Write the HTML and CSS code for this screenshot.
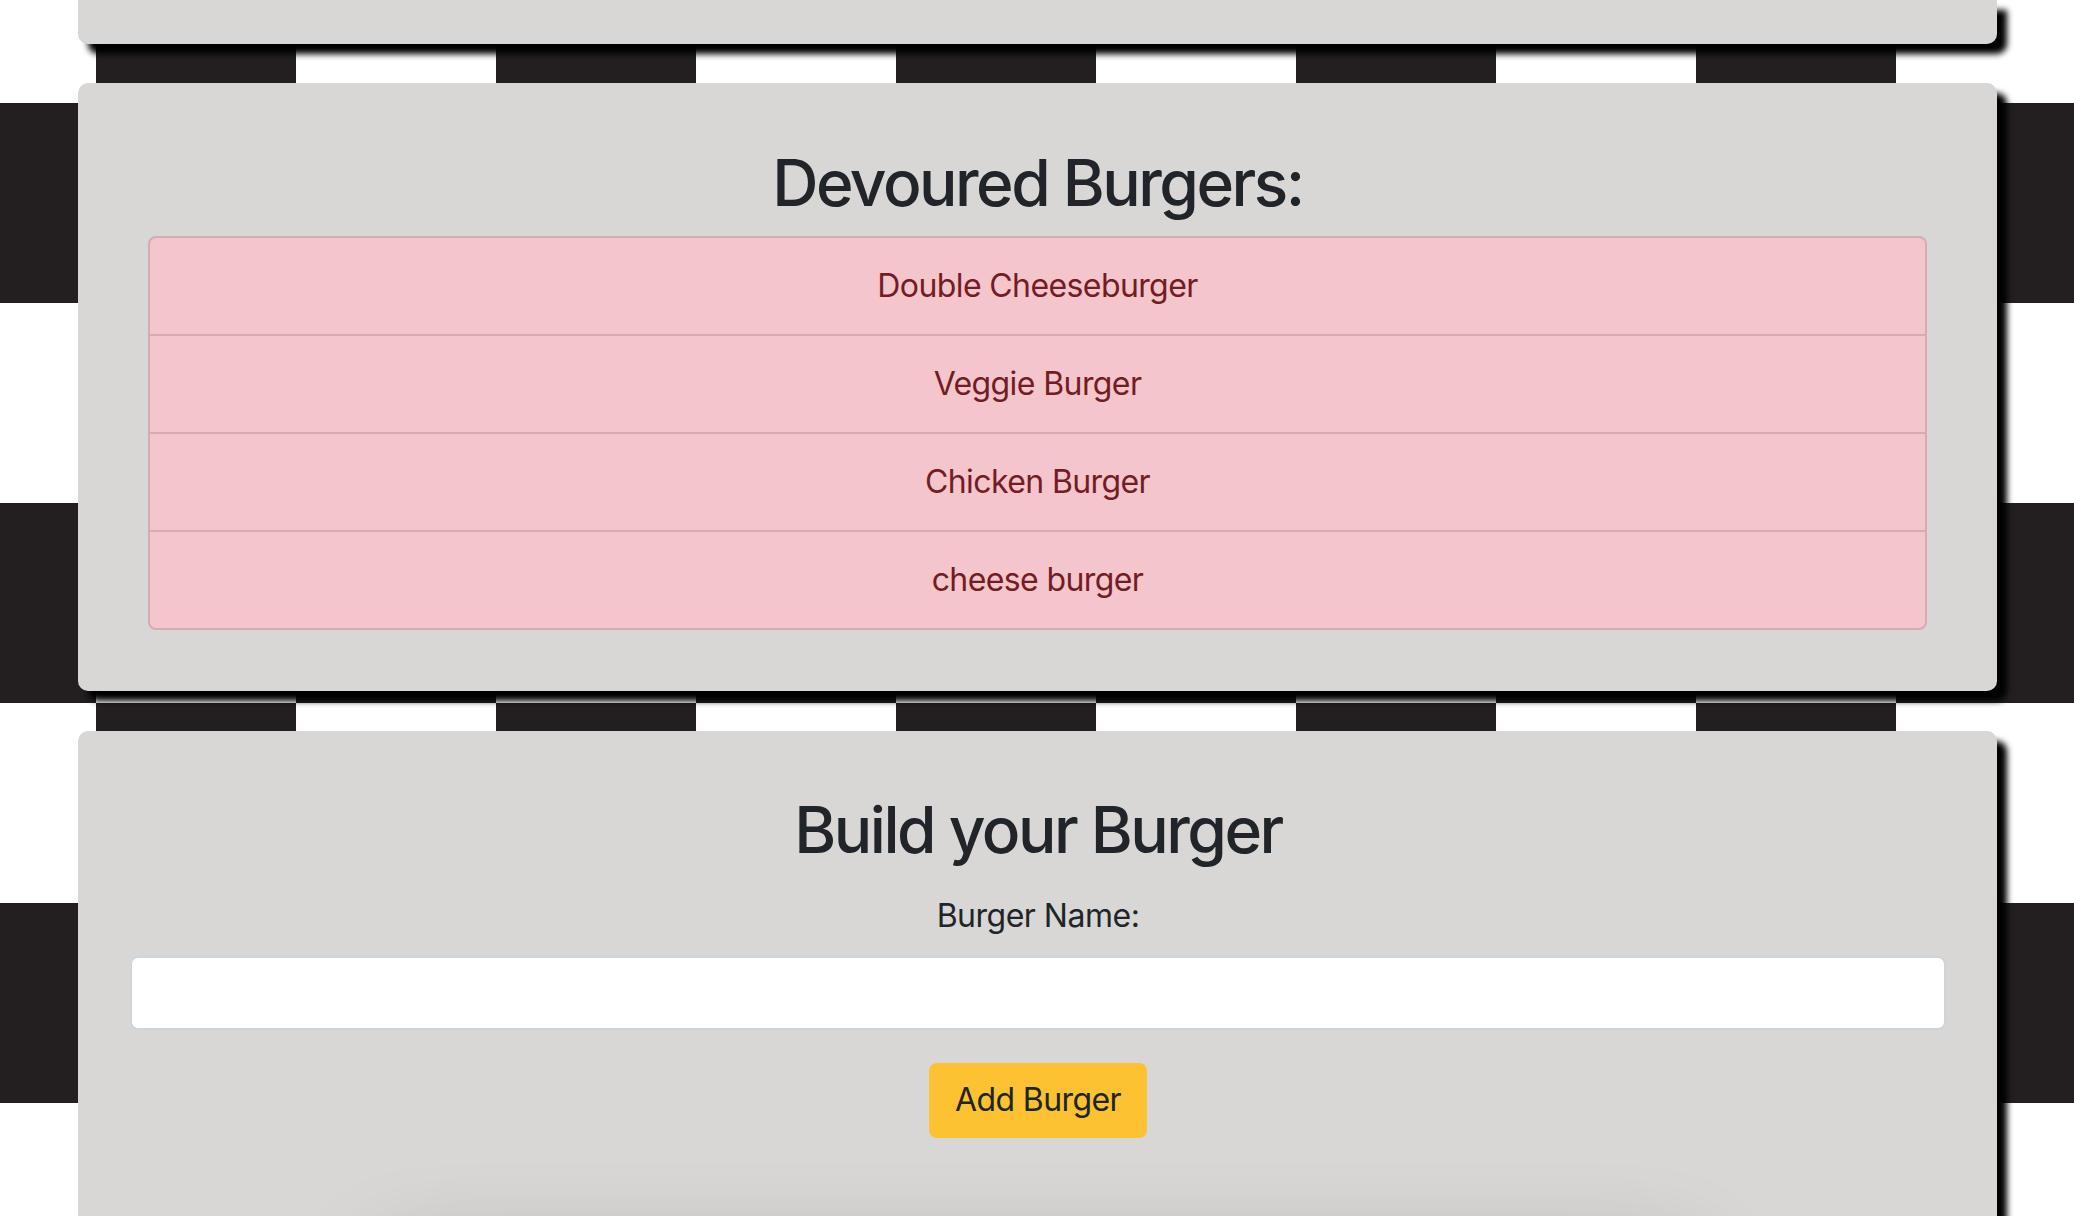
FILE: index.html
```html
<!DOCTYPE html>
<html lang="en">
<head>
<meta charset="utf-8">
<title>Burgers</title>
<link rel="stylesheet" href="styles.css">
</head>
<body>
<main class="page">
  <section class="card card-cut"></section>

  <section class="card card-devoured">
    <h2 class="title">Devoured Burgers:</h2>
    <ul class="burger-list">
      <li class="burger-item">Double Cheeseburger</li>
      <li class="burger-item">Veggie Burger</li>
      <li class="burger-item">Chicken Burger</li>
      <li class="burger-item">cheese burger</li>
    </ul>
  </section>

  <section class="card card-build">
    <h2 class="title title-build">Build your Burger</h2>
    <form class="burger-form">
      <label class="form-label" for="burger-name">Burger Name:</label>
      <input class="form-input" id="burger-name" type="text">
      <button class="btn-add" type="button">Add Burger</button>
    </form>
    <div class="below-panel"></div>
  </section>
</main>
</body>
</html>
```

FILE: styles.css
```css
html, body {
  margin: 0;
  padding: 0;
}

body {
  background-color: #ffffff;
  background-image: repeating-conic-gradient(#231f20 0 25%, #ffffff 0 50%);
  background-size: 400px 400px;
  background-position: 96px 103px;
  font-family: Inter, "Noto Sans", "Liberation Sans", sans-serif;
  color: #212529;
  overflow: hidden;
  height: 1216px;
}

.page {
  display: flex;
  flex-direction: column;
  gap: 39px;
  margin: 0 77px 0 78px;
}

.card {
  background: #d8d7d6;
  border-radius: 10px;
  box-shadow: 10px 10px 6px #000000;
}

.card-cut {
  height: 44px;
  border-radius: 0 0 10px 10px;
}

.card-devoured {
  padding: 62px 70px 61px 70px;
  margin-bottom: 1px;
}

.card-build {
  padding: 61px 51px 0 52px;
  height: 700px;
  overflow: hidden;
  position: relative;
}

.title {
  margin: 0 0 14px 0;
  font-size: 64px;
  font-weight: 500;
  line-height: 1.2;
  text-align: center;
  color: #212529;
  letter-spacing: -2.5px;
}

.title-build {
  margin-bottom: 23px;
}

.burger-list {
  list-style: none;
  margin: 0;
  padding: 0;
  border: 2px solid rgba(0, 0, 0, 0.125);
  border-radius: 8px;
  background: #f4c5cb;
  overflow: hidden;
}

.burger-item {
  padding: 24px 40px;
  font-size: 32px;
  line-height: 48px;
  text-align: center;
  color: #721c24;
  letter-spacing: -0.6px;
  border-bottom: 2px solid rgba(0, 0, 0, 0.125);
}

.burger-item:last-child {
  border-bottom: none;
}

.burger-form {
  display: flex;
  flex-direction: column;
  align-items: center;
}

.form-label {
  font-size: 32px;
  line-height: 48px;
  margin-bottom: 16px;
  letter-spacing: -0.5px;
}

.form-input {
  box-sizing: border-box;
  width: 100%;
  height: 74px;
  border: 2px solid #ced4da;
  border-radius: 8px;
  background: #ffffff;
  font-size: 32px;
  font-family: inherit;
  padding: 0 24px;
}

.btn-add {
  margin-top: 33px;
  box-sizing: border-box;
  height: 75px;
  padding: 0 26px;
  border: none;
  border-radius: 8px;
  background: #fdc231;
  color: #212529;
  font-family: inherit;
  font-size: 32px;
  line-height: 48px;
  letter-spacing: -0.6px;
}

.below-panel {
  margin: 130px auto 0;
  width: 1300px;
  height: 300px;
  background: #d8d7d6;
  box-shadow: 0 0 100px rgba(0, 0, 0, 0.28);
  border-radius: 10px;
}
```
